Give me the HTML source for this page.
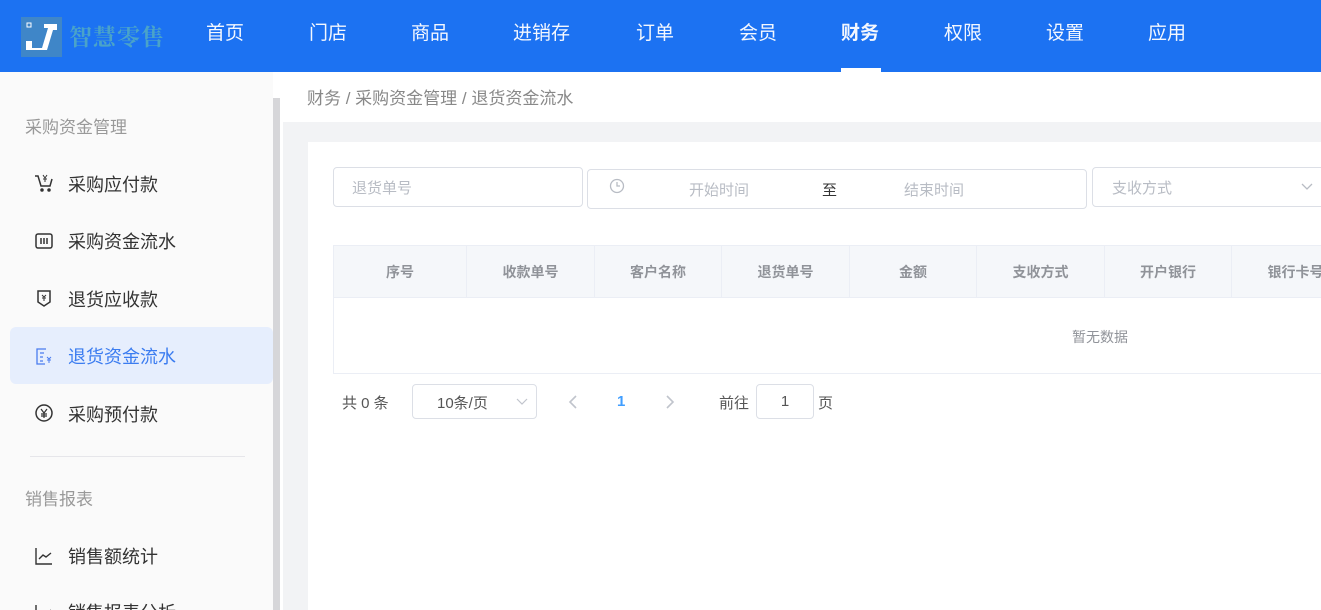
<!DOCTYPE html>
<html style="width:1321px;height:610px;overflow:hidden"><head><meta charset="utf-8"><style>
*{margin:0;padding:0;box-sizing:border-box}
body{width:1321px;height:610px;overflow:hidden;font-family:"Liberation Sans","Noto Sans CJK SC",sans-serif;background:#f2f3f5;position:relative;color:#333}
.top{position:absolute;left:0;top:0;width:1321px;height:72px;background:#1c72f2}
.nav{position:absolute;top:2px;height:72px;line-height:64px;color:#fff;font-size:19px;opacity:.95}
.nav.act{font-weight:bold}
.ul{position:absolute;left:841px;top:68px;width:40px;height:4px;background:#fff}
.side{position:absolute;left:0;top:72px;width:273px;height:538px;background:#fafafa}
.sb{position:absolute;left:273px;top:98px;width:7px;height:512px;background:#d6d6d9}
.sbt{position:absolute;left:273px;top:72px;width:10px;height:538px;background:#fff}
.grp{position:absolute;left:25px;font-size:17px;color:#999}
.it{position:absolute;left:68px;font-size:18px;color:#333}
.ic{position:absolute;left:34px}
.sel{position:absolute;left:10px;top:327px;width:263px;height:57px;background:#e6eefd;border-radius:6px}
.bc{position:absolute;left:283px;top:72px;width:1038px;height:50px;background:#fff;font-size:17px;color:#888;padding:12px 0 0 24px}
.card{position:absolute;left:308px;top:142px;width:1013px;height:468px;background:#fff}
.inp{position:absolute;border:1px solid #dcdfe6;border-radius:4px;height:40px;font-size:15px;color:#b8bcc4}
.th{position:absolute;top:246px;height:52px;line-height:52px;text-align:center;font-size:14px;font-weight:bold;color:#909399;border-right:1px solid #ebeef5}
</style></head><body>
<div class="top">
<svg style="position:absolute;left:21px;top:17px" width="41" height="40" viewBox="0 0 41 40"><rect width="41" height="40" fill="#3f86c8"/><rect x="6" y="6" width="4" height="4" fill="none" stroke="#fff" stroke-width="1"/><path d="M5 24h6v7h10l6-20h-4v-4h13v6h-4l-6 20H5z" fill="#fff"/></svg>
<div style="position:absolute;left:69px;top:19px;font-size:23px;font-weight:bold;color:#4aa3c9;font-family:'Noto Serif CJK SC',serif;letter-spacing:1px">智慧零售</div>
<div class="nav" style="left:206px">首页</div>
<div class="nav" style="left:309px">门店</div>
<div class="nav" style="left:411px">商品</div>
<div class="nav" style="left:513px">进销存</div>
<div class="nav" style="left:636px">订单</div>
<div class="nav" style="left:739px">会员</div>
<div class="nav act" style="left:841px">财务</div>
<div class="nav" style="left:944px">权限</div>
<div class="nav" style="left:1046px">设置</div>
<div class="nav" style="left:1148px">应用</div>
<div class="ul"></div>
</div>
<div class="side"></div>
<div class="sbt"></div><div class="sb"></div>
<div class="sel"></div>
<div class="grp" style="top:113px">采购资金管理</div>
<svg class="ic" style="top:173px" width="20" height="20" viewBox="0 0 20 20" fill="none" stroke="#333" stroke-width="1.5"><path d="M1 3h3l3 10h9l2-7"/><circle cx="8" cy="17" r="1" fill="#333"/><circle cx="15" cy="17" r="1" fill="#333"/><path d="M9 2l2 3 2-3M11 5v4M9 6h4" stroke-width="1"/></svg>
<div class="it" style="top:171px">采购应付款</div>
<svg class="ic" style="top:231px" width="20" height="20" viewBox="0 0 20 20" fill="none" stroke="#333" stroke-width="1.5"><rect x="2" y="3" width="16" height="14" rx="2"/><path d="M7 7v6M10 7v6M13 7v6"/></svg>
<div class="it" style="top:228px">采购资金流水</div>
<svg class="ic" style="top:288px" width="20" height="20" viewBox="0 0 20 20" fill="none" stroke="#333" stroke-width="1.5"><path d="M4 3h12v11l-6 4-6-4z"/><path d="M8 7l2 2 2-2M10 9v4M8 10h4" stroke-width="1"/></svg>
<div class="it" style="top:286px">退货应收款</div>
<svg class="ic" style="top:346px" width="20" height="20" viewBox="0 0 20 20" fill="none" stroke="#4a7cf0" stroke-width="1.3"><path d="M12 3H3v15h8M6 7h4M6 11h3M6 15h3"/><path d="M13 11l2 2 2-2M15 13v4M13 14h4" stroke-width="1"/></svg>
<div class="it" style="top:343px;color:#3b7cf0">退货资金流水</div>
<svg class="ic" style="top:403px" width="20" height="20" viewBox="0 0 20 20" fill="none" stroke="#333" stroke-width="1.5"><circle cx="10" cy="10" r="8"/><path d="M7 6l3 4 3-4M10 10v5M7 11h6M7 13h6" stroke-width="1.2"/></svg>
<div class="it" style="top:401px">采购预付款</div>
<div style="position:absolute;left:30px;top:456px;width:215px;height:1px;background:#e6e6ea"></div>
<div class="grp" style="top:485px">销售报表</div>
<svg class="ic" style="top:546px" width="20" height="20" viewBox="0 0 20 20" fill="none" stroke="#333" stroke-width="1.4"><path d="M2 2v16h16M5 13l4-4 3 2 5-4"/></svg>
<div class="it" style="top:543px">销售额统计</div>
<svg class="ic" style="top:603px" width="20" height="20" viewBox="0 0 20 20" fill="none" stroke="#333" stroke-width="1.4"><path d="M2 2v16h16M5 13l4-4 3 2 5-4"/></svg>
<div class="it" style="top:599px">销售报表分析</div>
<div class="bc">财务 / 采购资金管理 / 退货资金流水</div>
<div class="card"></div>
<div class="inp" style="left:333px;top:167px;width:250px;padding:9px 0 0 18px">退货单号</div>
<div class="inp" style="left:587px;top:169px;width:500px"><svg style="position:absolute;left:21px;top:8px" width="16" height="16" viewBox="0 0 16 16" fill="none" stroke="#b8bcc4" stroke-width="1.3"><circle cx="8" cy="8" r="6.5"/><path d="M8 4v4h3"/></svg><span style="position:absolute;left:101px;top:9px">开始时间</span><span style="position:absolute;left:234px;top:9px;color:#333">至</span><span style="position:absolute;left:316px;top:9px">结束时间</span></div>
<div class="inp" style="left:1092px;top:167px;width:240px;padding:9px 0 0 19px">支收方式<svg style="position:absolute;left:208px;top:15px" width="12" height="8" viewBox="0 0 12 8" fill="none" stroke="#b8bcc4" stroke-width="1.3"><path d="M1 1l5 5 5-5"/></svg></div>
<div style="position:absolute;left:333px;top:245px;width:988px;height:129px;border:1px solid #ebeef5;border-right:none"></div>
<div style="position:absolute;left:334px;top:246px;width:987px;height:52px;background:#f5f7fa;border-bottom:1px solid #ebeef5"></div>
<div class="th" style="left:334px;width:133px">序号</div>
<div class="th" style="left:467px;width:128px">收款单号</div>
<div class="th" style="left:595px;width:127px">客户名称</div>
<div class="th" style="left:722px;width:128px">退货单号</div>
<div class="th" style="left:850px;width:127px">金额</div>
<div class="th" style="left:977px;width:128px">支收方式</div>
<div class="th" style="left:1105px;width:127px">开户银行</div>
<div class="th" style="left:1232px;width:128px">银行卡号</div>
<div style="position:absolute;left:1072px;top:327px;font-size:14px;color:#909399">暂无数据</div>
<div style="position:absolute;left:342px;top:392px;font-size:15px;color:#555">共 0 条</div>
<div class="inp" style="left:412px;top:384px;width:125px;height:35px;color:#555;padding:7px 0 0 24px">10条/页<svg style="position:absolute;left:103px;top:13px" width="12" height="8" viewBox="0 0 12 8" fill="none" stroke="#c0c4cc" stroke-width="1.2"><path d="M1 1l5 5 5-5"/></svg></div>
<svg style="position:absolute;left:568px;top:395px" width="10" height="14" viewBox="0 0 10 14" fill="none" stroke="#c0c4cc" stroke-width="1.6"><path d="M8 1L2 7l6 6"/></svg>
<div style="position:absolute;left:617px;top:393px;font-size:15px;font-weight:bold;color:#409eff">1</div>
<svg style="position:absolute;left:665px;top:395px" width="10" height="14" viewBox="0 0 10 14" fill="none" stroke="#c0c4cc" stroke-width="1.6"><path d="M2 1l6 6-6 6"/></svg>
<div style="position:absolute;left:719px;top:392px;font-size:15px;color:#555">前往</div>
<div class="inp" style="left:756px;top:384px;width:58px;height:35px;color:#555;text-align:center;padding-top:8px">1</div>
<div style="position:absolute;left:818px;top:392px;font-size:15px;color:#555">页</div>
</body></html>
